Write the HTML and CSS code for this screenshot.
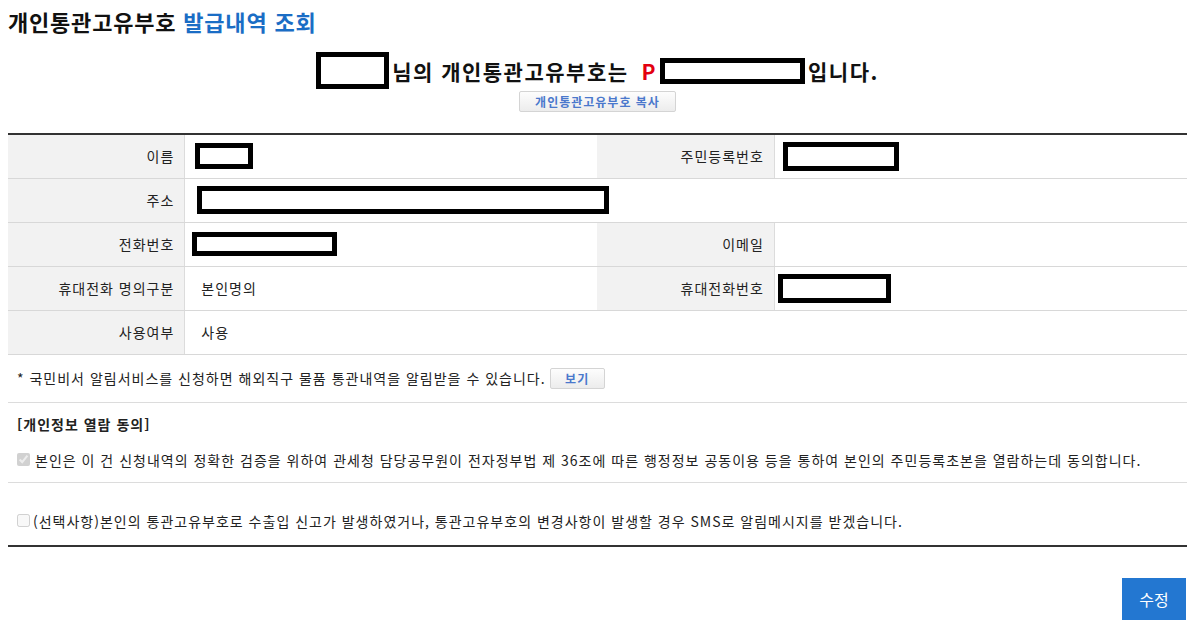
FILE: index.html
```html
<!DOCTYPE html>
<html lang="ko">
<head>
<meta charset="utf-8">
<title>개인통관고유부호 발급내역 조회</title>
<link rel="stylesheet" href="styles.css">
</head>
<body>
<h1 class="title">개인통관고유부호 <span class="title-blue">발급내역 조회</span></h1>

<div class="headline">
  <span class="redact redact-name"></span>
  <span class="hl-text">님의 개인통관고유부호는</span>
  <span class="hl-p">P</span>
  <span class="redact redact-code"></span>
  <span class="hl-text">입니다.</span>
</div>
<div class="copy-wrap">
  <button class="btn-gray btn-copy" type="button">개인통관고유부호 복사</button>
</div>

<table class="info">
  <colgroup>
    <col class="c-th"><col class="c-td"><col class="c-th"><col class="c-td">
  </colgroup>
  <tbody>
    <tr>
      <th>이름</th>
      <td><span class="redact r-name"></span></td>
      <th>주민등록번호</th>
      <td><span class="redact r-rrn"></span></td>
    </tr>
    <tr>
      <th>주소</th>
      <td colspan="3"><span class="redact r-addr"></span></td>
    </tr>
    <tr>
      <th>전화번호</th>
      <td><span class="redact r-tel"></span></td>
      <th>이메일</th>
      <td></td>
    </tr>
    <tr>
      <th>휴대전화 명의구분</th>
      <td>본인명의</td>
      <th>휴대전화번호</th>
      <td><span class="redact r-mobile"></span></td>
    </tr>
    <tr>
      <th>사용여부</th>
      <td>사용</td>
      <th class="empty-th"></th>
      <td class="empty-td"></td>
    </tr>
  </tbody>
</table>

<div class="notice">
  <span>* 국민비서 알림서비스를 신청하면 해외직구 물품 통관내역을 알림받을 수 있습니다.</span>
  <button class="btn-gray btn-view" type="button">보기</button>
</div>

<div class="consent">
  <p class="consent-title">[개인정보 열람 동의]</p>
  <label class="check-line"><input type="checkbox" checked disabled><span>본인은 이 건 신청내역의 정확한 검증을 위하여 관세청 담당공무원이 전자정부법 제 36조에 따른 행정정보 공동이용 등을 통하여 본인의 주민등록초본을 열람하는데 동의합니다.</span></label>
</div>

<div class="sms">
  <label class="check-line check-sms"><input type="checkbox" disabled><span>(선택사항)본인의 통관고유부호로 수출입 신고가 발생하였거나, 통관고유부호의 변경사항이 발생할 경우 SMS로 알림메시지를 받겠습니다.</span></label>
</div>

<div class="actions">
  <button class="btn-blue" type="button">수정</button>
</div>
</body>
</html>
```

FILE: styles.css
```css
* { box-sizing: border-box; }

body {
  margin: 8px;
  font-family: "Noto Sans CJK KR", "Noto Sans", sans-serif;
  color: #222;
  background: #fff;
  letter-spacing: 1px;
}

.title {
  margin: 0;
  font-size: 22px;
  line-height: 26px;
  font-weight: bold;
  color: #111;
  letter-spacing: 0.8px;
}
.title-blue { color: #1a6dc5; }

.headline {
  margin-top: 18px;
  height: 37px;
  display: flex;
  justify-content: center;
  align-items: center;
  font-size: 21px;
  font-weight: bold;
  color: #111;
  letter-spacing: 1.5px;
}
.hl-text { line-height: 26px; }
.hl-p {
  color: #e3000f;
  margin-left: 13px;
  margin-right: 3px;
  line-height: 26px;
}

.redact {
  display: inline-block;
  border: 5px solid #000;
  background: #fff;
}
.redact-name { width: 73px; height: 37px; margin-right: 3px; }
.redact-code { width: 145px; height: 26px; margin-right: 3px; }

.copy-wrap {
  margin-top: 2px;
  display: flex;
  justify-content: center;
}

.btn-gray {
  font-family: inherit;
  border: 1px solid #d4d4d4;
  border-radius: 2px;
  background: linear-gradient(#fdfdfd, #ececec);
  color: #4a78cc;
  font-size: 12px;
  font-weight: 600;
  letter-spacing: 1px;
  padding: 0;
  cursor: pointer;
}
.btn-copy { width: 157px; height: 21px; line-height: 19px; }

.info {
  width: 100%;
  margin-top: 21px;
  border-collapse: collapse;
  border-top: 2px solid #333;
  table-layout: fixed;
  font-size: 14px;
}
.c-th { width: 15%; }
.c-td { width: 35%; }

.info th,
.info td {
  height: 44px;
  border-bottom: 1px solid #d8d8d8;
  padding: 0;
  vertical-align: middle;
}
.info th {
  background: #f2f2f2;
  font-weight: normal;
  text-align: right;
  padding-right: 10px;
  border-right: 1px solid #dcdcdc;
  color: #222;
}
.info td {
  text-align: left;
  padding-left: 16px;
  color: #222;
}
.info .empty-th,
.info .empty-td {
  background: #fff;
  border-right: 0;
}

.info .redact { vertical-align: middle; }
.r-name { width: 58px; height: 26px; margin-left: -6px; }
.r-rrn { width: 116px; height: 29px; margin-left: -8px; }
.r-addr { width: 412px; height: 28px; margin-left: -4px; }
.r-tel { width: 145px; height: 24px; margin-left: -9px; }
.r-mobile { width: 113px; height: 29px; margin-left: -13px; }

.notice {
  display: flex;
  align-items: center;
  padding: 13px 9px;
  border-bottom: 1px solid #dcdcdc;
  font-size: 14px;
  line-height: 21px;
}
.btn-view {
  width: 55px;
  height: 21px;
  margin-left: 4px;
  line-height: 19px;
}

.consent {
  padding: 11px 9px 12px;
  border-bottom: 1px solid #dcdcdc;
  font-size: 14px;
}
.consent-title {
  margin: 0 0 16px;
  font-weight: bold;
  line-height: 20px;
}

.check-line {
  display: flex;
  align-items: center;
  line-height: 20px;
}
.check-line input {
  width: 13px;
  height: 13px;
  margin: 0 5px 0 0;
  flex: none;
}
.check-sms input { margin-right: 3px; }

.sms {
  padding: 28px 9px 14px;
  border-bottom: 2px solid #333;
  font-size: 14px;
}

.actions {
  display: flex;
  justify-content: flex-end;
  margin-top: 31px;
}
.btn-blue {
  width: 64px;
  height: 42px;
  margin-right: 1px;
  border: 0;
  background: #2377d1;
  color: #fff;
  font-family: inherit;
  font-size: 16px;
  letter-spacing: 0;
  cursor: pointer;
}
```
